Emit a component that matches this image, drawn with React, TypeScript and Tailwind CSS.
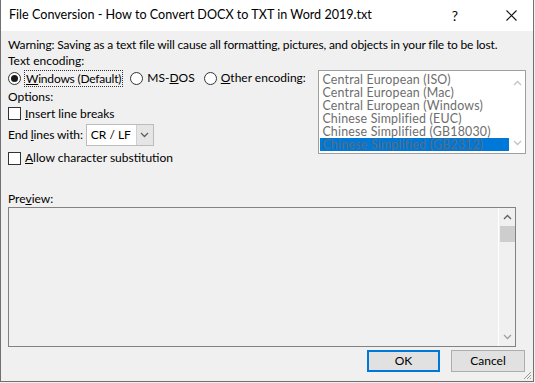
import React from "react";

const encodings = [
  "Central European (ISO)",
  "Central European (Mac)",
  "Central European (Windows)",
  "Chinese Simplified (EUC)",
  "Chinese Simplified (GB18030)",
  "Chinese Simplified (GB2312)",
];

const Chevron = ({ up, className }: { up?: boolean; className?: string }) => (
  <svg width="9" height="6" viewBox="0 0 9 6" className={className}>
    <path
      d={up ? "M1 5 L4.5 1.5 L8 5" : "M1 1 L4.5 4.5 L8 1"}
      fill="none"
      stroke="currentColor"
      strokeWidth="1.3"
    />
  </svg>
);

const Radio = ({ checked }: { checked?: boolean }) => (
  <span className="w-[13px] h-[13px] rounded-full border border-[#333333] bg-white flex items-center justify-center shrink-0">
    {checked && <span className="w-[7px] h-[7px] rounded-full bg-[#1a1a1a]" />}
  </span>
);

const Checkbox = () => (
  <span className="w-[13px] h-[13px] border border-[#333333] bg-white shrink-0" />
);

export default function App() {
  return (
    <div className="relative w-[535px] h-[383px] overflow-hidden bg-[#f0f0f0] font-['Lato',sans-serif] text-[12px] text-black whitespace-nowrap">
      <div className="w-[534px] h-[382px] flex flex-col border-l border-r border-b border-[#707070]">
        {/* Title bar */}
        <div className="h-[31px] bg-white flex items-center pl-[8px] shrink-0">
          <span className="text-[12.6px] flex-1 leading-none">
            File Conversion - How to Convert DOCX to TXT in Word 2019.txt
          </span>
          <span className="w-[68px] text-center text-[14px]">?</span>
          <span className="w-[44px] flex justify-center">
            <svg width="11" height="11" viewBox="0 0 11 11">
              <path d="M0.5 0.5 L10.5 10.5 M10.5 0.5 L0.5 10.5" stroke="#111" strokeWidth="1.1" />
            </svg>
          </span>
        </div>

        {/* Body */}
        <div className="flex-1 flex flex-col px-[7px] pt-[6px] relative">
          <div className="leading-[16px] tracking-[-0.16px]">
            Warning: Saving as a text file will cause all formatting, pictures, and objects in your file to be lost.
          </div>
          <div className="leading-[16px]">Text encoding:</div>

          <div className="flex items-start">
            <div className="w-[311px] flex flex-col">
              <div className="h-[18px] flex items-center">
                <Radio checked />
                <span className="ml-[3px] px-[1px] border border-dotted border-[#333] leading-[15px] tracking-[-0.2px]">
                  <u>W</u>indows (Default)
                </span>
                <span className="ml-[7px]"><Radio /></span>
                <span className="ml-[4px]">MS-<u>D</u>OS</span>
                <span className="ml-[9px]"><Radio /></span>
                <span className="ml-[4px]"><u>O</u>ther encoding:</span>
              </div>
              <div className="leading-[16px] mt-[2px]">Options:</div>
              <div className="h-[17px] flex items-center">
                <Checkbox />
                <span className="ml-[4px]"><u>I</u>nsert line breaks</span>
              </div>
              <div className="h-[24px] mt-[1px] flex items-center">
                <span className="tracking-[-0.1px]">End <u>l</u>ines with:</span>
                <div className="ml-[3px] w-[68px] h-[22px] flex border border-[#bcbcbc] bg-white">
                  <span className="flex-1 pl-[4px] leading-[20px]">CR / LF</span>
                  <span className="w-[17px] bg-[#e5e5e5] border-l border-[#d0d0d0] flex items-center justify-center text-[#606060]">
                    <Chevron />
                  </span>
                </div>
              </div>
              <div className="h-[18px] mt-[2px] flex items-center">
                <Checkbox />
                <span className="ml-[4px]"><u>A</u>llow character substitution</span>
              </div>
            </div>

            <div className="mt-[1px] w-[208px] h-[84px] border border-[#a0a0a0] bg-white flex pt-[2px] pl-[1px] text-[12.4px] tracking-[0.2px]">
              <div className="flex-1 flex flex-col text-[#6d6d6d]">
                {encodings.map((e, i) => (
                  <div
                    key={e}
                    className={`h-[13px] leading-[13px] pl-[2px] ${i === 5 ? "bg-[#0078d7] text-[#5d6b79]" : ""}`}
                  >
                    {e}
                  </div>
                ))}
              </div>
              <div className="w-[16px] flex flex-col items-center justify-between py-[7px] text-[#c3c3c3]">
                <Chevron up />
                <Chevron />
              </div>
            </div>
          </div>

          <div className="leading-[16px] mt-[24px]">
            Pre<u>v</u>iew:
          </div>
          <div className="w-[508px] h-[140px] border border-[#828282] flex justify-end">
            <div className="w-[17px] border-l border-white flex flex-col items-center">
              <span className="mt-[6px] text-[#606060]"><Chevron up /></span>
              <span className="mt-[6px] w-[15px] h-[16px] bg-[#cdcdcd]" />
              <span className="mt-auto mb-[6px] text-[#a0a0a0]"><Chevron /></span>
            </div>
          </div>

          <div className="flex justify-end mt-[3px] pr-[1px] gap-[11px]">
            <button className="w-[73px] h-[22px] border-2 border-[#0078d7] bg-[#e1e1e1] leading-none">OK</button>
            <button className="w-[74px] h-[22px] border border-[#adadad] bg-[#e1e1e1] leading-none">Cancel</button>
          </div>

          <svg width="10" height="10" viewBox="0 0 10 10" className="absolute right-[1px] bottom-[1px]">
            <path d="M9 2 L2 9 M9 5 L5 9 M9 8 L8 9" stroke="#9a9a9a" strokeWidth="1" />
          </svg>
        </div>
      </div>
      <div className="absolute left-[24px] top-[382px] text-[12px] text-[#333] leading-none">
        <span>ic Document (*.docx)</span>
        <span className="ml-[150px]">Word 97-2003 Document (*.doc)</span>
      </div>
    </div>
  );
}
